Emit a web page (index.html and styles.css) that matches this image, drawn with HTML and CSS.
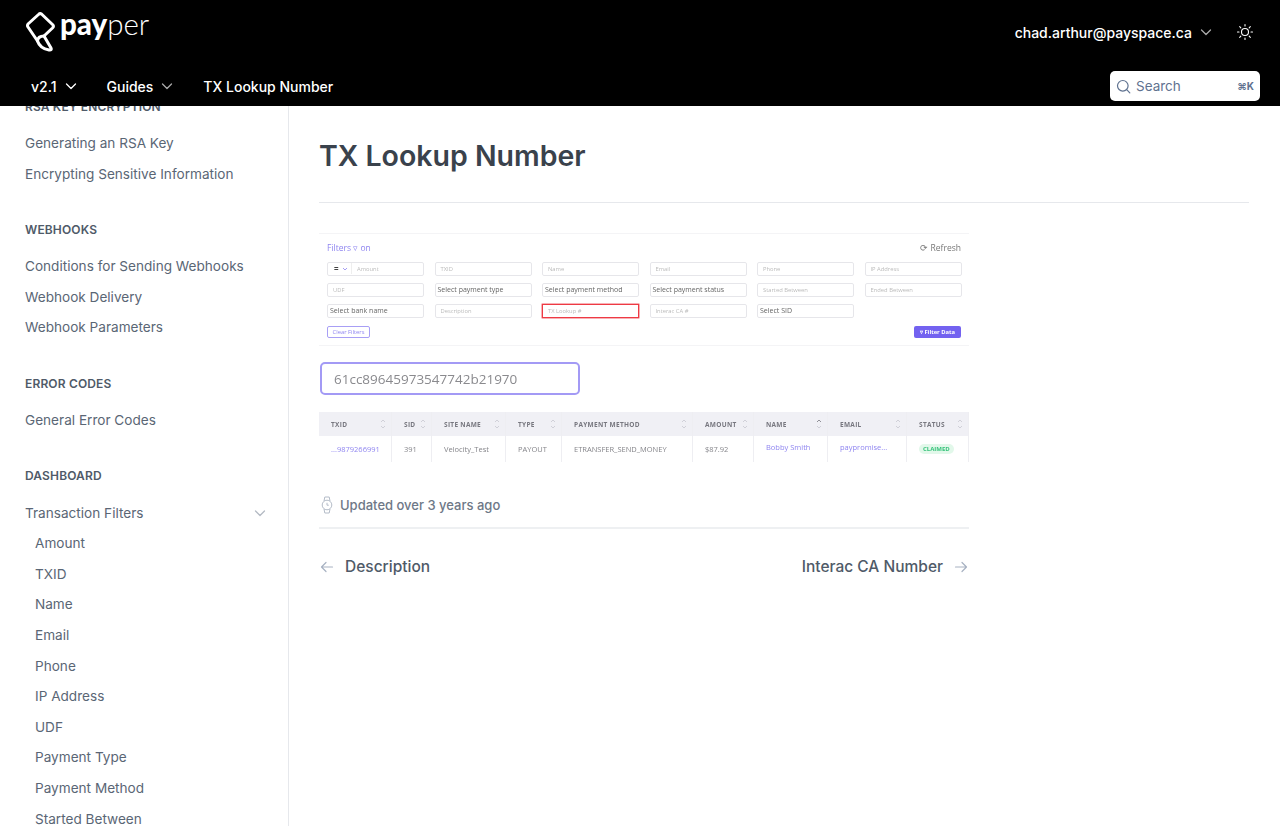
FILE: index.html
```html
<!DOCTYPE html>
<html lang="en">

<head>
    <meta charset="UTF-8">
    <meta name="viewport" content="width=device-width, initial-scale=1.0">
    <title>TX Lookup Number</title>
    <link rel="stylesheet" href="styles.css">
</head>

<body>
    <svg class="defs" width="0" height="0">
        <symbol id="sort" viewBox="0 0 6 12">
            <path d="M1 4 L3 2 L5 4 M1 8 L3 10 L5 8" fill="none" stroke="currentColor" stroke-width="0.800"></path>
        </symbol>
        <symbol id="sort-up" viewBox="0 0 6 12">
            <path d="M1 4 L3 2 L5 4" fill="none" stroke="#77777f" stroke-width="0.800"></path>
            <path d="M1 8 L3 10 L5 8" fill="none" stroke="#c8c8d0" stroke-width="0.800"></path>
        </symbol>
    </svg>

    <header class="topbar">
        <div class="topbar-row">
            <a class="logo" href="#">
                <svg class="logo-mark" width="29" height="40" viewBox="0 0 29 40" fill="none" stroke="#fff" stroke-width="3" stroke-linejoin="round" stroke-linecap="round">
                    <path d="M15.500 2 L27 13 Q28 14.500 26.500 16 L18 24 L25 36 Q26 38.500 23 38 Q14 36.500 11.500 29 L2 15 Q1 13.500 2 12 L12.500 2.500 Q14 1 15.500 2 Z"></path>
                    <path d="M18 24 Q12 24 11.500 29"></path>
                </svg>
                <span class="logo-text"><b>pay</b>per</span>
            </a>
            <div class="account">
                <span>chad.arthur@payspace.ca</span>
                <svg class="chev chev-dim" width="12" height="12" viewBox="0 0 12 12"><path d="M1.500 4 L6 8.500 L10.500 4"></path></svg>
                <svg class="sun" width="18" height="18" viewBox="0 0 18 18" fill="none" stroke="#fff" stroke-width="1.100" stroke-linecap="round">
                    <circle cx="9" cy="9" r="3.500"></circle>
                    <path d="M9 1.500 V3 M9 15 V16.500 M1.500 9 H3 M15 9 H16.500 M3.700 3.700 L4.800 4.800 M13.200 13.200 L14.300 14.300 M3.700 14.300 L4.800 13.200 M13.200 4.800 L14.300 3.700"></path>
                </svg>
            </div>
        </div>
        <div class="topbar-row topbar-nav">
            <nav class="nav">
                <a class="nav-item" href="#">v2.1
                    <svg class="chev" width="12" height="12" viewBox="0 0 12 12"><path d="M1.500 4 L6 8.500 L10.500 4"></path></svg>
                </a>
                <a class="nav-item" href="#">Guides
                    <svg class="chev chev-dim" width="12" height="12" viewBox="0 0 12 12"><path d="M1.500 4 L6 8.500 L10.500 4"></path></svg>
                </a>
                <a class="nav-item" href="#">TX Lookup Number</a>
            </nav>
            <div class="search">
                <svg width="15" height="15" viewBox="0 0 15 15" fill="none" stroke="#5f7290" stroke-width="1.200" stroke-linecap="round">
                    <circle cx="6.800" cy="6.800" r="5.300"></circle>
                    <path d="M10.700 10.700 L13.800 13.800"></path>
                </svg>
                <span class="search-label">Search</span>
                <span class="search-key">⌘K</span>
            </div>
        </div>
    </header>

    <div class="layout">
        <aside class="sidebar">
            <div class="sidebar-inner">
                <h4>RSA Key Encryption</h4>
                <ul>
                    <li>Generating an RSA Key</li>
                    <li>Encrypting Sensitive Information</li>
                </ul>
                <h4>Webhooks</h4>
                <ul>
                    <li>Conditions for Sending Webhooks</li>
                    <li>Webhook Delivery</li>
                    <li>Webhook Parameters</li>
                </ul>
                <h4>Error Codes</h4>
                <ul>
                    <li>General Error Codes</li>
                </ul>
                <h4>Dashboard</h4>
                <ul>
                    <li class="has-sub">Transaction Filters
                        <svg class="chev chev-side" width="12" height="12" viewBox="0 0 12 12"><path d="M1.500 4 L6 8.500 L10.500 4"></path></svg>
                    </li>
                    <li class="sub">Amount</li>
                    <li class="sub">TXID</li>
                    <li class="sub">Name</li>
                    <li class="sub">Email</li>
                    <li class="sub">Phone</li>
                    <li class="sub">IP Address</li>
                    <li class="sub">UDF</li>
                    <li class="sub">Payment Type</li>
                    <li class="sub">Payment Method</li>
                    <li class="sub">Started Between</li>
                </ul>
            </div>
        </aside>

        <main class="content">
            <h1>TX Lookup Number</h1>

            <div class="shot">
                <div class="shot-filters">
                    <div class="shot-top">
                        <span class="shot-title">Filters ▿ on</span>
                        <span class="shot-refresh">⟳ Refresh</span>
                    </div>
                    <div class="shot-grid">
                        <div class="fld fld-op"><span class="op">=<svg width="6" height="6" viewBox="0 0 6 6"><path d="M1 2 L3 4 L5 2" fill="none" stroke="#8f85f0" stroke-width="0.800"></path></svg></span><span>Amount</span></div>
                        <div class="fld">TXID</div>
                        <div class="fld">Name</div>
                        <div class="fld">Email</div>
                        <div class="fld">Phone</div>
                        <div class="fld">IP Address</div>
                        <div class="fld">UDF</div>
                        <div class="fld fld-sel">Select payment type</div>
                        <div class="fld fld-sel">Select payment method</div>
                        <div class="fld fld-sel">Select payment status</div>
                        <div class="fld">Started Between</div>
                        <div class="fld">Ended Between</div>
                        <div class="fld fld-sel">Select bank name</div>
                        <div class="fld">Description</div>
                        <div class="fld fld-red">TX Lookup #</div>
                        <div class="fld">Interac CA #</div>
                        <div class="fld fld-sel">Select SID</div>
                    </div>
                    <div class="shot-actions">
                        <span class="btn-clear">Clear Filters</span>
                        <span class="btn-filter">▿ Filter Data</span>
                    </div>
                </div>

                <div class="shot-lookup">61cc89645973547742b21970</div>

                <div class="shot-table">
                    <div class="tr th">
                        <span>TXID<svg class="sort"><use href="#sort"></use></svg></span>
                        <span>SID<svg class="sort"><use href="#sort"></use></svg></span>
                        <span>Site Name<svg class="sort"><use href="#sort"></use></svg></span>
                        <span>Type<svg class="sort"><use href="#sort"></use></svg></span>
                        <span>Payment Method<svg class="sort"><use href="#sort"></use></svg></span>
                        <span>Amount<svg class="sort"><use href="#sort"></use></svg></span>
                        <span>Name<svg class="sort"><use href="#sort-up"></use></svg></span>
                        <span>Email<svg class="sort"><use href="#sort"></use></svg></span>
                        <span>Status<svg class="sort"><use href="#sort"></use></svg></span>
                    </div>
                    <div class="tr td">
                        <span class="link">...9879266991</span><span>391</span><span>Velocity_Test</span><span>PAYOUT</span><span>ETRANSFER_SEND_MONEY</span><span>$87.92</span><span class="link up">Bobby Smith</span><span class="link up">paypromise...</span><span><i class="pill">CLAIMED</i></span>
                    </div>
                </div>
            </div>

            <div class="updated">
                <svg width="14" height="18" viewBox="0 0 14 18" fill="none" stroke="#b4bcc8" stroke-width="1">
                    <circle cx="7" cy="9" r="4.800"></circle>
                    <path d="M4 5 L4.800 1 H9.200 L10 5 M4 13 L4.800 17 H9.200 L10 13 M7 6.800 V9.200 H8.800"></path>
                </svg>
                <span>Updated over 3 years ago</span>
            </div>

            <div class="pager">
                <a class="pager-link" href="#">
                    <svg width="14" height="14" viewBox="0 0 14 14" fill="none" stroke="#a7b1c2" stroke-width="1.200" stroke-linecap="round" stroke-linejoin="round"><path d="M12.500 7 H1.500 M6 2.500 L1.500 7 L6 11.500"></path></svg>
                    <span>Description</span>
                </a>
                <a class="pager-link" href="#">
                    <span>Interac CA Number</span>
                    <svg width="14" height="14" viewBox="0 0 14 14" fill="none" stroke="#a7b1c2" stroke-width="1.200" stroke-linecap="round" stroke-linejoin="round"><path d="M1.500 7 H12.500 M8 2.500 L12.500 7 L8 11.500"></path></svg>
                </a>
            </div>
        </main>
    </div>
</body>

</html>
```

FILE: styles.css
```css
* {
    box-sizing: border-box;
}

body {
    margin: 0;
    height: 826px;
    overflow: hidden;
    font-family: Inter, "Liberation Sans", sans-serif;
    background-color: #fff;
    color: #4f5a68;
}

a {
    color: inherit;
    text-decoration: none;
}

.defs {
    display: block;
}

/* header */
.topbar {
    height: 106px;
    background-color: #000;
    color: #fff;
    padding: 0 20px 0 25px;
}

.topbar-row {
    display: flex;
    justify-content: space-between;
    align-items: center;
}

.topbar-row:first-child {
    height: 64px;
}

.topbar-nav {
    height: 42px;
}

.logo {
    display: flex;
    align-items: center;
    gap: 5px;
    margin-top: -1px;
    padding-left: 1px;
}

.logo-text {
    font-family: Lato, sans-serif;
    font-size: 29.500px;
    font-weight: 300;
    margin-top: -17px;
}

.logo-text b {
    font-weight: 900;
}

.account {
    display: flex;
    align-items: center;
    font-size: 14px;
    font-weight: 500;
    margin-right: 6px;
}

.chev {
    fill: none;
    stroke: #fff;
    stroke-width: 1.300;
    stroke-linecap: round;
    stroke-linejoin: round;
}

.chev-dim {
    stroke: #a9a9a9;
}

.account .chev {
    margin-left: 8px;
}

.sun {
    margin-left: 24px;
}

.nav {
    display: flex;
    gap: 30px;
    padding-left: 6px;
    margin-top: 2px;
}

.nav-item {
    display: flex;
    align-items: center;
    gap: 8px;
    font-size: 14px;
    font-weight: 500;
}

.search {
    display: flex;
    align-items: center;
    width: 150px;
    height: 30px;
    padding: 0 6px;
    background-color: #fff;
    border-radius: 5px;
    margin-top: 2px;
    color: #5f7290;
}

.search-label {
    margin-left: 5px;
    font-size: 13.500px;
    flex: 1;
}

.search-key {
    font-size: 10px;
    font-weight: 700;
}

/* layout */
.layout {
    display: flex;
    height: 720px;
}

.sidebar {
    width: 289px;
    flex-shrink: 0;
    overflow: hidden;
    border-right: 1px solid #e6e8ec;
}

.sidebar-inner {
    margin-top: -6.200px;
    padding: 0 20px 0 25px;
}

.sidebar h4 {
    margin: 0;
    height: 14px;
    line-height: 14px;
    font-size: 12px;
    font-weight: 600;
    letter-spacing: 0.15px;
    text-transform: uppercase;
    color: #4f5a68;
}

.sidebar ul {
    list-style: none;
    margin: 14px 0 34px;
    padding: 0;
}

.sidebar li {
    display: flex;
    justify-content: space-between;
    align-items: center;
    height: 30.600px;
    font-size: 13.600px;
    color: #5a6675;
}

.sidebar li.sub {
    padding-left: 10px;
}

.chev-side {
    stroke: #b4bac4;
    margin-right: 2px;
}

/* main */
.content {
    flex: 1;
    padding: 29px 31px 0 30px;
}

h1 {
    margin: 0;
    height: 68px;
    line-height: 42px;
    font-size: 28.500px;
    font-weight: 600;
    color: #3a424c;
    border-bottom: 1px solid #e6e8ec;
}

/* picture of the dashboard */
.shot {
    width: 650px;
    margin-top: 30px;
    font-family: "Open Sans", sans-serif;
    filter: blur(0.45px);
}

.shot-filters {
    height: 113px;
    padding: 6px 8px 0;
    border-top: 1px solid #f4f4f6;
    border-bottom: 1px solid #f4f4f6;
}

.shot-top {
    display: flex;
    justify-content: space-between;
    align-items: center;
    height: 14px;
    font-size: 8.500px;
}

.shot-title {
    color: #8f85f0;
}

.shot-refresh {
    color: #777;
}

.shot-grid {
    display: grid;
    grid-template-columns: repeat(6, 97px);
    column-gap: 10.500px;
    row-gap: 7.500px;
    margin-top: 8px;
}

.fld {
    display: flex;
    align-items: center;
    height: 13.500px;
    padding-left: 5px;
    font-size: 5.800px;
    color: #bbb;
    border: 1px solid #e6e6ea;
    border-radius: 2px;
}

.fld-sel {
    padding-left: 2px;
    font-size: 7px;
    color: #666;
}

.fld-red {
    border-color: #ee3a44;
    border-radius: 0;
    box-shadow: 0 0 0 0.400px #ee3a44;
}

.fld-op {
    padding-left: 0;
}

.op {
    display: flex;
    align-items: center;
    gap: 3px;
    width: 24px;
    padding-left: 6px;
    margin-right: 5px;
    color: #444;
    font-weight: 700;
    font-size: 8px;
    border-right: 1px solid #eee;
}

.shot-actions {
    display: flex;
    justify-content: space-between;
    margin-top: 8px;
}

.btn-clear,
.btn-filter {
    display: flex;
    align-items: center;
    justify-content: center;
    height: 12px;
    font-size: 5.800px;
    border-radius: 2px;
}

.btn-clear {
    width: 43px;
    color: #8f85f0;
    border: 1px solid #a89ff5;
}

.btn-filter {
    width: 47px;
    color: #fff;
    font-weight: 700;
    background-color: #7362f0;
}

.shot-lookup {
    display: flex;
    align-items: center;
    width: 260px;
    height: 33px;
    margin: 16px 0 0 1px;
    padding-left: 12px;
    font-size: 13.500px;
    color: #8a8a8e;
    border: 2px solid #a39af5;
    border-radius: 5px;
}

.shot-table {
    margin-top: 17px;
}

.tr {
    display: grid;
    grid-template-columns: 73px 40px 74px 56px 131px 61px 74px 79px 62px;
    font-size: 7.500px;
}

.tr span {
    display: flex;
    align-items: center;
    justify-content: space-between;
    padding: 0 5px 0 12px;
    border-right: 1px solid #eeeef2;
}

.th {
    height: 24px;
    background-color: #f0f0f5;
    font-size: 6.500px;
    font-weight: 700;
    letter-spacing: 0.3px;
    text-transform: uppercase;
    color: #77777f;
}

.sort {
    width: 6px;
    height: 12px;
    color: #c8c8d0;
    flex-shrink: 0;
}

.td {
    height: 26px;
    color: #85858a;
}

.td .link {
    color: #8f85f0;
}

.td .up {
    padding-bottom: 4px;
}

.pill {
    padding: 1px 4px;
    font-style: normal;
    font-size: 6px;
    font-weight: 700;
    color: #36c27a;
    background-color: #e2f8ea;
    border-radius: 5px;
}

/* footer of the page */
.updated {
    display: flex;
    align-items: center;
    gap: 6px;
    width: 650px;
    height: 67px;
    padding: 21px 0 0 1px;
    font-size: 13px;
    font-weight: 500;
    color: #6e7887;
    border-bottom: 2px solid #eef0f2;
}

.pager {
    display: flex;
    justify-content: space-between;
    width: 650px;
    margin-top: 28px;
}

.pager-link {
    display: flex;
    align-items: center;
    gap: 11px;
    padding: 0 1px;
    font-size: 15.500px;
    font-weight: 500;
    color: #4f5a68;
}
```
